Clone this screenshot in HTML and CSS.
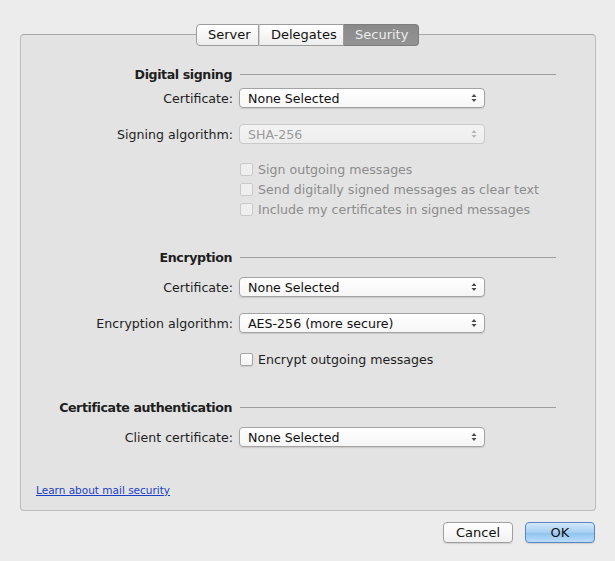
FILE: index.html
```html
<!DOCTYPE html>
<html lang="en">
<head>
    <meta charset="UTF-8">
    <title>Account - Security</title>
    <link rel="stylesheet" href="styles.css">
</head>
<body>

<div class="window">
    <div class="tabs">
        <div class="tab">Server</div>
        <div class="tab">Delegates</div>
        <div class="tab selected">Security</div>
    </div>

    <div class="panel">
        <!-- Digital signing -->
        <div class="row heading first">
            <span class="label">Digital signing</span>
            <span class="rule"></span>
        </div>
        <div class="row gap-s">
            <span class="label">Certificate:</span>
            <div class="popup"><span>None Selected</span><svg class="arrows" width="6" height="10" viewBox="0 0 6 10"><path d="M3 1 L5.5 4 H0.5 Z M3 9 L5.5 6 H0.5 Z"/></svg></div>
        </div>
        <div class="row gap-m">
            <span class="label">Signing algorithm:</span>
            <div class="popup disabled"><span>SHA-256</span><svg class="arrows" width="6" height="10" viewBox="0 0 6 10"><path d="M3 1 L5.5 4 H0.5 Z M3 9 L5.5 6 H0.5 Z"/></svg></div>
        </div>
        <div class="row check-row gap-c">
            <span></span>
            <label class="check disabled"><span class="box"></span>Sign outgoing messages</label>
        </div>
        <div class="row check-row">
            <span></span>
            <label class="check disabled"><span class="box"></span>Send digitally signed messages as clear text</label>
        </div>
        <div class="row check-row">
            <span></span>
            <label class="check disabled"><span class="box"></span>Include my certificates in signed messages</label>
        </div>

        <!-- Encryption -->
        <div class="row heading gap-l">
            <span class="label">Encryption</span>
            <span class="rule"></span>
        </div>
        <div class="row gap-h">
            <span class="label">Certificate:</span>
            <div class="popup"><span>None Selected</span><svg class="arrows" width="6" height="10" viewBox="0 0 6 10"><path d="M3 1 L5.5 4 H0.5 Z M3 9 L5.5 6 H0.5 Z"/></svg></div>
        </div>
        <div class="row gap-m">
            <span class="label">Encryption algorithm:</span>
            <div class="popup"><span>AES-256 (more secure)</span><svg class="arrows" width="6" height="10" viewBox="0 0 6 10"><path d="M3 1 L5.5 4 H0.5 Z M3 9 L5.5 6 H0.5 Z"/></svg></div>
        </div>
        <div class="row check-row gap-m">
            <span></span>
            <label class="check"><span class="box"></span>Encrypt outgoing messages</label>
        </div>

        <!-- Certificate authentication -->
        <div class="row heading gap-l">
            <span class="label">Certificate authentication</span>
            <span class="rule"></span>
        </div>
        <div class="row gap-h">
            <span class="label">Client certificate:</span>
            <div class="popup"><span>None Selected</span><svg class="arrows" width="6" height="10" viewBox="0 0 6 10"><path d="M3 1 L5.5 4 H0.5 Z M3 9 L5.5 6 H0.5 Z"/></svg></div>
        </div>

        <a class="help-link" href="#">Learn about mail security</a>
    </div>

    <div class="buttons">
        <button class="btn">Cancel</button>
        <button class="btn default">OK</button>
    </div>
</div>

</body>
</html>
```

FILE: styles.css
```css
body {
    margin: 0;
    padding: 0;
    font-family: "DejaVu Sans", "Liberation Sans", sans-serif;
    font-size: 12.6px;
    color: #1e1e1e;
}

.window {
    width: 615px;
    height: 561px;
    background-color: #ececec;
    padding-top: 24px;
    box-sizing: border-box;
}

/* segmented tab control, sits over the panel's top border */
.tabs {
    display: flex;
    justify-content: center;
    margin-bottom: -12px;
    position: relative;
    z-index: 1;
}

.tab {
    height: 20px;
    line-height: 20px;
    padding: 0 11px;
    border: 1px solid #9c9c9c;
    border-left: none;
    background: linear-gradient(#ffffff, #ededed);
    font-size: 13px;
    color: #111;
}

.tab:first-child {
    border-left: 1px solid #9c9c9c;
    border-radius: 4px 0 0 4px;
    width: 39px;
}

.tab:nth-child(2) {
    width: 61px;
    border-left: 1px solid #d4d4d4;
}

.tab:last-child {
    border-radius: 0 4px 4px 0;
    width: 52px;
}

.tab.selected {
    background: linear-gradient(#8a8a8a, #939393);
    color: #ececec;
    border-color: #7d7d7d;
}

.panel {
    margin: 0 19px 0 20px;
    height: 477px;
    box-sizing: border-box;
    border: 1px solid #bcbcbc;
    border-top-color: #a9a9a9;
    border-radius: 4px;
    background-color: #e3e3e3;
    padding: 30px 0 0 0;
    display: flex;
    flex-direction: column;
}

.row {
    display: grid;
    grid-template-columns: 212px 317px;
    column-gap: 6px;
    align-items: center;
    height: 20px;
}

.row .label {
    text-align: right;
    white-space: nowrap;
}

.heading {
    height: 18px;
}

.heading .label {
    font-weight: bold;
    letter-spacing: -0.4px;
    padding-right: 1px;
}

.heading .rule {
    border-top: 1px solid #9e9e9e;
    height: 0;
    margin-left: 1px;
}

.gap-s { margin-top: 5px; }
.gap-m { margin-top: 16px; }
.gap-c { margin-top: 15px; }
.gap-l { margin-top: 29px; }
.gap-h { margin-top: 11px; }

/* pop-up buttons */
.popup {
    width: 246px;
    height: 20px;
    box-sizing: border-box;
    border: 1px solid #a3a3a3;
    border-radius: 4px;
    background: linear-gradient(#ffffff, #f6f6f6);
    box-shadow: 0 1px 1px rgba(0, 0, 0, 0.12);
    display: flex;
    align-items: center;
    justify-content: space-between;
    padding: 0 7px 0 8px;
    color: #111;
}

.popup .arrows {
    fill: #4a4a4a;
}

.popup.disabled {
    border-color: #c9c9c9;
    background: linear-gradient(#f3f3f3, #ededed);
    box-shadow: none;
    color: #9a9a9a;
}

.popup.disabled .arrows {
    fill: #b5b5b5;
}

/* checkboxes */
.check {
    display: flex;
    align-items: center;
    gap: 5px;
    white-space: nowrap;
    margin-left: 1px;
}

.check .box {
    width: 13px;
    height: 13px;
    box-sizing: border-box;
    border: 1px solid #a4a4a4;
    border-radius: 2px;
    background: linear-gradient(#ffffff, #f2f2f2);
    box-shadow: 0 1px 1px rgba(0, 0, 0, 0.1);
}

.check.disabled {
    color: #8c8c8c;
}

.check.disabled .box {
    border-color: #cacaca;
    background: #efefef;
    box-shadow: none;
}

.help-link {
    margin-top: 36px;
    margin-left: 15px;
    font-size: 10.5px;
    line-height: 14px;
    color: #1a3fc4;
    align-self: flex-start;
}

.buttons {
    display: flex;
    justify-content: flex-end;
    gap: 12px;
    margin: 11px 20px 0 0;
}

.btn {
    width: 70px;
    height: 21px;
    border: 1px solid #a0a0a0;
    border-radius: 4px;
    background: linear-gradient(#ffffff, #f1f1f1);
    box-shadow: 0 1px 1px rgba(0, 0, 0, 0.12);
    font-family: inherit;
    font-size: 13px;
    color: #111;
    padding: 0;
}

.btn.default {
    border-color: #5b87c0;
    background: linear-gradient(#d4e8fa, #a6cff3 50%, #8cc2f1 51%, #bcdcf8);
}
```
